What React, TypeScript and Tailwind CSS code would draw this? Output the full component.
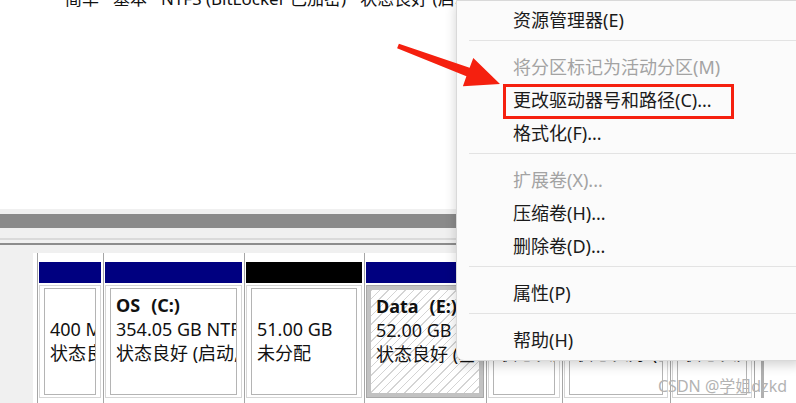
import React from 'react';

type Part = {
  w: string;
  bar: string;
  name?: [string, string];
  size: string;
  status: string;
  selected?: boolean;
};

const parts: Part[] = [
  { w: 'w-[66px]', bar: 'bg-[#000080]', size: '400 MB', status: '状态良好 (EFI 系统分区)' },
  { w: 'w-[141px]', bar: 'bg-[#000080]', name: ['OS', '(C:)'], size: '354.05 GB NTFS (BitLocker 已加密)', status: '状态良好 (启动, 页面文件, 故障转储, 基本数据分区)' },
  { w: 'w-[120px]', bar: 'bg-black', size: '51.00 GB', status: '未分配' },
  { w: 'w-[122px]', bar: 'bg-[#000080]', name: ['Data', '(E:)'], size: '52.00 GB NTFS', status: '状态良好 (基本数据分区)', selected: true },
  { w: 'w-[76px]', bar: 'bg-[#000080]', size: '20.00 GB NTFS', status: '状态良好 (基本数据分区)' },
  { w: 'w-[108px]', bar: 'bg-[#000080]', size: '150.00 GB NTFS', status: '状态良好 (基本数据分区)' },
  { w: 'w-[84px]', bar: 'bg-[#000080]', size: '1.00 GB', status: '状态良好 (恢复分区)' },
];

type MenuEntry = { label?: string; disabled?: boolean; highlight?: boolean; sep?: boolean };

const menu: MenuEntry[] = [
  { label: '资源管理器(E)' },
  { sep: true },
  { label: '将分区标记为活动分区(M)', disabled: true },
  { label: '更改驱动器号和路径(C)...', highlight: true },
  { label: '格式化(F)...' },
  { sep: true },
  { label: '扩展卷(X)...', disabled: true },
  { label: '压缩卷(H)...' },
  { label: '删除卷(D)...' },
  { sep: true },
  { label: '属性(P)' },
  { sep: true },
  { label: '帮助(H)' },
];

function PartitionBox({ p }: { p: Part }) {
  return (
    <div className={`${p.w} flex flex-col border-l border-[#a6a6a6] pl-[1px] pr-[2px] pt-[9px]`}>
      <div className={`h-[21px] ${p.bar}`} />
      <div
        className={`mt-[2px] h-[113px] border ${
          p.selected ? 'border-[#a8a8a8] bg-[#c2c2c2] p-[4px]' : 'border-[#d6d6d6] bg-white px-[4px] py-[2px]'
        }`}
      >
        <div
          className={`h-full overflow-hidden whitespace-nowrap pl-[5px] pt-[4px] text-[18px] leading-[24px] text-[#111] ${
            p.selected
              ? 'bg-[image:repeating-linear-gradient(135deg,#d4d4d4_0px,#d4d4d4_1px,#ffffff_1px,#ffffff_6px)]'
              : 'border border-[#b4b4b4] bg-white'
          }`}
        >
          <div className="flex h-[24px] gap-[11px] font-bold">
            {p.name && (
              <>
                <span>{p.name[0]}</span>
                <span>{p.name[1]}</span>
              </>
            )}
          </div>
          <div>{p.size}</div>
          <div>{p.status}</div>
        </div>
      </div>
    </div>
  );
}

function ContextMenu() {
  return (
    <div className="absolute left-[456px] top-0 w-[345px] rounded-bl-[8px] border border-[#d9d9d9] bg-[#fbfbfb] pt-[3px] pb-[3px] shadow-[0_4px_12px_rgba(0,0,0,0.18)]">
      {menu.map((m, i) =>
        m.sep ? (
          <div key={i} className="h-[14px] pl-[12px] pt-[3px]">
            <div className="h-px bg-[#e3e3e3]" />
          </div>
        ) : (
          <div
            key={i}
            className={`relative flex h-[33px] items-center pl-[56px] text-[18px] ${
              m.disabled ? 'text-[#a3a3a3]' : 'text-[#1a1a1a]'
            }`}
          >
            {m.label}
            {m.highlight && (
              <div className="absolute left-[46px] top-0 h-[35px] w-[231px] border-[3px] border-[#f5200f]" />
            )}
          </div>
        )
      )}
    </div>
  );
}

function Arrow() {
  return (
    <svg className="absolute left-[390px] top-[35px]" width="120" height="70" viewBox="0 0 120 70">
      <polygon
        points="8.9,8.7 79.6,32.8 83.3,23 110,49 72.9,51.2 76.4,41.2 7.1,13.3"
        fill="#f5200f"
      />
    </svg>
  );
}

export default function App() {
  return (
    <div className="relative h-[403px] w-[796px] overflow-hidden bg-white font-['Noto_Sans','Noto_Sans_CJK_SC',sans-serif]">
      <div className="h-[209px] overflow-hidden bg-white">
        <div className="mt-[-12px] flex gap-[14px] whitespace-nowrap pl-[65px] text-[17px] leading-[22px] text-[#111]">
          <span className="shrink-0">简单</span>
          <span className="shrink-0">基本</span>
          <span className="shrink-0">NTFS (BitLocker 已加密)</span>
          <span className="shrink-0">状态良好 (启动, 页面文件, 故障转储)</span>
        </div>
      </div>

      <div className="h-[5px] bg-[#f0f0f0]" />
      <div className="h-[14px] bg-[#8a8a8a]" />
      <div className="h-[10px] bg-[#f0f0f0]" />
      <div className="h-[2px] bg-[#dadada]" />
      <div className="h-[3px] bg-[#f0f0f0]" />
      <div className="h-[2px] bg-[#8c8c8c]" />
      <div className="h-[8px] bg-[#f0f0f0]" />

      <div className="flex h-[150px]">
        <div className="w-[33px] bg-[#f0f0f0]" />
        <div className="flex flex-1 bg-white pl-[4px]">
          {parts.map((p, i) => (
            <PartitionBox key={i} p={p} />
          ))}
          <div className="flex h-[145px] w-[12px] border-l border-[#a6a6a6]">
            <div className="w-[6px] bg-white" />
            <div className="w-[3px] bg-[#b0b0b0]" />
          </div>
          <div className="flex-1 bg-white" />
        </div>
      </div>

      <ContextMenu />
      <Arrow />

      <div className="absolute left-[658px] top-[375px] text-[16px] leading-[22px] text-[#b3b3b3]">CSDN @学姐dzkd</div>
    </div>
  );
}
